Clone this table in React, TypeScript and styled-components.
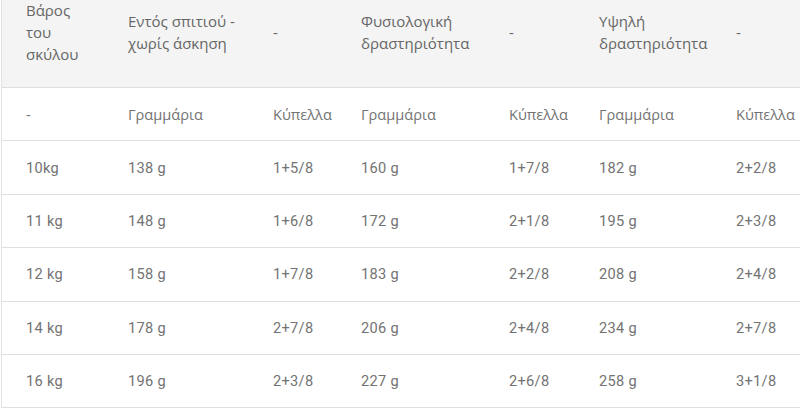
import styled, { createGlobalStyle } from "styled-components";

const GlobalStyle = createGlobalStyle`
  html, body {
    margin: 0;
    padding: 0;
    background: #ffffff;
    overflow: hidden;
  }
`;

const header = [
  "Βάρος του σκύλου",
  "Εντός σπιτιού - χωρίς άσκηση",
  "-",
  "Φυσιολογική δραστηριότητα",
  "-",
  "Υψηλή δραστηριότητα",
  "-",
];

const rows = [
  ["-", "Γραμμάρια", "Κύπελλα", "Γραμμάρια", "Κύπελλα", "Γραμμάρια", "Κύπελλα"],
  ["10kg", "138 g", "1+5/8", "160 g", "1+7/8", "182 g", "2+2/8"],
  ["11 kg", "148 g", "1+6/8", "172 g", "2+1/8", "195 g", "2+3/8"],
  ["12 kg", "158 g", "1+7/8", "183 g", "2+2/8", "208 g", "2+4/8"],
  ["14 kg", "178 g", "2+7/8", "206 g", "2+4/8", "234 g", "2+7/8"],
  ["16 kg", "196 g", "2+3/8", "227 g", "2+6/8", "258 g", "3+1/8"],
];

function App() {
  return (
    <Page>
      <GlobalStyle />
      <Table>
        <HeadRow>
          {header.map((h, i) => (
            <HeadCell key={i} $narrow={i === 0}>
              {h}
            </HeadCell>
          ))}
        </HeadRow>
        {rows.map((r, ri) => (
          <Row key={ri}>
            {r.map((c, ci) => (
              <Cell key={ci} $label={ri === 0}>
                {c}
              </Cell>
            ))}
          </Row>
        ))}
      </Table>
    </Page>
  );
}

const Page = styled.div`
  width: 800px;
  height: 408px;
  overflow: hidden;
`;
const Table = styled.div`
  width: 860px;
  margin-top: -23px;
  border-left: 1px solid #e2e2e2;
  margin-left: 1px;
`;
const cols = "102px 145px 88px 148px 90px 137px 124px";
const HeadRow = styled.div`
  display: grid;
  grid-template-columns: ${cols};
  align-items: center;
  height: 110px;
  padding-left: 24px;
  background: #f4f4f4;
  border-bottom: 1px solid #dedede;
`;
const HeadCell = styled.div<{ $narrow?: boolean }>`
  font-family: "Open Sans", "Noto Sans", sans-serif;
  font-size: 15px;
  line-height: 22px;
  color: #666666;
  padding-right: ${(p) => (p.$narrow ? "40px" : "20px")};
`;
const Row = styled.div`
  display: grid;
  grid-template-columns: ${cols};
  align-items: center;
  height: 52.4px;
  padding-left: 24px;
  border-bottom: 1px solid #dfdfdf;
`;
const Cell = styled.div<{ $label?: boolean }>`
  font-family: ${(p) =>
    p.$label ? '"Open Sans", "Noto Sans", sans-serif' : "Roboto, sans-serif"};
  font-size: ${(p) => (p.$label ? "14.6px" : "14.6px")};
  letter-spacing: ${(p) => (p.$label ? "0" : "0.3px")};
  color: #737373;
  white-space: nowrap;
`;

export default App;
